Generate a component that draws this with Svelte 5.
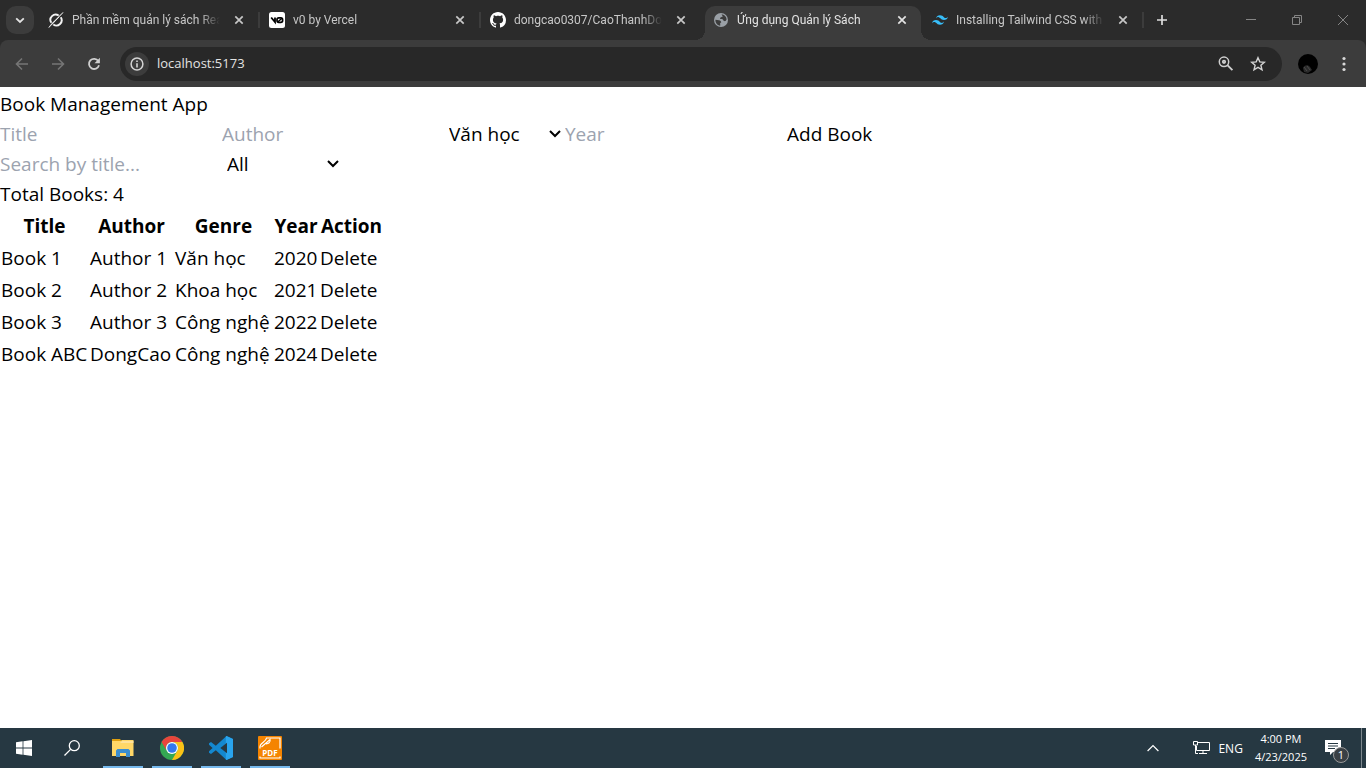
<script>
  const tabs = [
    { icon: 'grok', title: 'Phần mềm quản lý sách React' },
    { icon: 'v0', title: 'v0 by Vercel' },
    { icon: 'github', title: 'dongcao0307/CaoThanhDong' },
    { icon: 'globe', title: 'Ứng dụng Quản lý Sách', active: true },
    { icon: 'tailwind', title: 'Installing Tailwind CSS with Vite' }
  ];
  const genres = ['Văn học', 'Khoa học', 'Công nghệ'];

  let books = $state([
    { title: 'Book 1', author: 'Author 1', genre: 'Văn học', year: 2020 },
    { title: 'Book 2', author: 'Author 2', genre: 'Khoa học', year: 2021 },
    { title: 'Book 3', author: 'Author 3', genre: 'Công nghệ', year: 2022 },
    { title: 'Book ABC', author: 'DongCao', genre: 'Công nghệ', year: 2024 }
  ]);
  let title = $state('');
  let author = $state('');
  let genre = $state('Văn học');
  let year = $state('');
  let search = $state('');
  let filter = $state('All');

  const shown = $derived(
    books.filter(
      (b) => b.title.toLowerCase().includes(search.toLowerCase()) && (filter === 'All' || b.genre === filter)
    )
  );

  function addBook() {
    if (!title || !author || !year) return;
    books.push({ title, author, genre, year });
    title = author = year = '';
  }
  function remove(book) {
    books = books.filter((b) => b !== book);
  }
</script>

{#snippet cross()}
  <svg width="10" height="10" viewBox="0 0 10 10"><path d="M1.3 1.3 8.7 8.7M8.7 1.3 1.3 8.7" fill="none" stroke="currentColor" stroke-width="1.7" /></svg>
{/snippet}

{#snippet chevron()}
  <svg class="chev" width="12" height="8" viewBox="0 0 12 8"><path d="M1 1 6 6 11 1" fill="none" stroke="#000" stroke-width="2" /></svg>
{/snippet}

{#snippet favicon(name)}
  <svg class="fav" width="16" height="16" viewBox="0 0 16 16">
    {#if name === 'grok'}
      <g fill="none" stroke="#f2f2f2" stroke-width="1.9">
        <path d="M10.7 3.6A5.2 5.2 0 0 0 3.4 10.8" />
        <path d="M5.3 12.4A5.2 5.2 0 0 0 12.7 5.3" />
      </g>
      <path d="M15.2.4 5.8 10.2 12.1 3.2ZM.7 15.6 4 11.3 11 5 3.5 12.9Z" fill="#f2f2f2" stroke="#f2f2f2" stroke-width=".6" />
    {:else if name === 'v0'}
      <rect width="16" height="16" rx="2.5" fill="#fff" />
      <path d="M2.2 5.5 6 10V5.5" fill="none" stroke="#000" stroke-width="1.8" />
      <rect x="8" y="5.8" width="5.6" height="4.6" rx="1.8" fill="none" stroke="#000" stroke-width="1.7" />
      <path d="m8.7 10 4.5-4" stroke="#000" stroke-width="1.4" />
    {:else if name === 'github'}
      <path fill="#fff" d="M8 0C3.58 0 0 3.58 0 8c0 3.54 2.29 6.53 5.47 7.59.4.07.55-.17.55-.38 0-.19-.01-.82-.01-1.49-2.01.37-2.53-.49-2.69-.94-.09-.23-.48-.94-.82-1.13-.28-.15-.68-.52-.01-.53.63-.01 1.08.58 1.23.82.72 1.21 1.87.87 2.33.66.07-.52.28-.87.51-1.07-1.78-.2-3.64-.89-3.64-3.95 0-.87.31-1.59.82-2.15-.08-.2-.36-1.02.08-2.12 0 0 .67-.21 2.2.82.64-.18 1.32-.27 2-.27s1.36.09 2 .27c1.53-1.04 2.2-.82 2.2-.82.44 1.1.16 1.92.08 2.12.51.56.82 1.27.82 2.15 0 3.07-1.87 3.75-3.65 3.95.29.25.54.73.54 1.48 0 1.07-.01 1.93-.01 2.2 0 .21.15.46.55.38A8.01 8.01 0 0 0 16 8c0-4.42-3.58-8-8-8Z" />
    {:else if name === 'globe'}
      <circle cx="8" cy="8" r="7" fill="#9aa0a6" />
      <path fill="#3c3c3c" d="M2.4 7.7 6 8.2c1.4.3 2.3 1 2.2 2.4l-1 .5v2.6C4.100 13.300 2.300 10.700 2.400 7.700ZM8.500 2.300c2.600.2 4.800 2.200 5.100 4.900-.4 1.500-1.200 2.100-2.300 1.900-1.200-.2-1-1.700-2.200-2L7.300 6.900c-.5-.7 0-1.300.7-1.700l1.800-.7Z" />
    {:else}
      <path fill="#38bdf8" d="M8 3.200c-2.130 0-3.470 1.070-4 3.200.8-1.070 1.730-1.470 2.800-1.200.61.150 1.040.59 1.530 1.080C9.120 7.080 10.030 8 12 8c2.130 0 3.470-1.070 4-3.200-.8 1.070-1.730 1.470-2.800 1.200-.61-.15-1.040-.59-1.530-1.080C10.880 4.120 9.970 3.200 8 3.200ZM4 8C1.870 8 .53 9.070 0 11.200.8 10.130 1.730 9.730 2.800 10c.61.150 1.040.59 1.530 1.080.79.8 1.700 1.720 3.670 1.720 2.130 0 3.470-1.070 4-3.200-.8 1.070-1.730 1.470-2.800 1.200-.61-.15-1.040-.59-1.530-1.080C6.880 8.920 5.970 8 4 8Z" />
    {/if}
  </svg>
{/snippet}

<div class="screen">
  <header class="browser">
    <div class="strip">
      <button class="tabsearch" aria-label="Search tabs">
        <svg width="10" height="7" viewBox="0 0 10 7"><path d="M1.200 1.300 5 5l3.800-3.700" fill="none" stroke="#e3e3e3" stroke-width="1.800" /></svg>
      </button>
      <div class="tabs">
        {#each tabs as tab}
          <div class="tab" class:active={tab.active}>
            {@render favicon(tab.icon)}
            <span class="tabtitle">{tab.title}</span>
            <button class="close" aria-label="Close tab">{@render cross()}</button>
          </div>
        {/each}
      </div>
      <button class="newtab" aria-label="New tab">
        <svg width="12" height="12" viewBox="0 0 12 12"><path d="M6 1v10M1 6h10" stroke="#dedede" stroke-width="1.700" /></svg>
      </button>
      <div class="wincontrols">
        <button aria-label="Minimize"><svg width="12" height="12" viewBox="0 0 12 12"><path d="M1 5.500h10" stroke="#858585" /></svg></button>
        <button aria-label="Restore"><svg width="12" height="12" viewBox="0 0 12 12" fill="none" stroke="#858585"><path d="M1.500 3.500h7v7h-7zM3.500 3.500v-2h7v7h-2" /></svg></button>
        <button aria-label="Close"><svg width="12" height="12" viewBox="0 0 12 12"><path d="m1 1 10 10M11 1 1 11" stroke="#858585" /></svg></button>
      </div>
    </div>

    <div class="toolbar">
      <button class="nav" aria-label="Back"><svg width="14" height="14" viewBox="0 0 14 14" fill="none" stroke="#757575" stroke-width="1.600"><path d="M13 7H2M7 1.500 1.500 7 7 12.500" /></svg></button>
      <button class="nav" aria-label="Forward"><svg width="14" height="14" viewBox="0 0 14 14" fill="none" stroke="#757575" stroke-width="1.600"><path d="M1 7h11M7 1.500 12.500 7 7 12.500" /></svg></button>
      <button class="nav" aria-label="Reload"><svg width="14" height="14" viewBox="0 0 14 14"><path d="M11.300 4A5.100 5.100 0 1 0 12 8.300" fill="none" stroke="#d0d0d0" stroke-width="1.800" /><path d="M12.900.8v5.400H7.500Z" fill="#d0d0d0" /></svg></button>
      <div class="omnibox">
        <button class="info" aria-label="Site information"><svg width="14" height="14" viewBox="0 0 14 14"><circle cx="7" cy="7" r="5.900" fill="none" stroke="#d4d4d4" stroke-width="1.500" /><path d="M7 6.200v4.200M7 3.500V5" stroke="#d4d4d4" stroke-width="1.600" /></svg></button>
        <input class="url" aria-label="Address" value="localhost:5173" />
        <button class="act" aria-label="Zoom"><svg width="16" height="16" viewBox="0 0 16 16" fill="none" stroke="#cfcfcf"><circle cx="6" cy="5.800" r="4.700" stroke-width="1.500" /><circle cx="6" cy="5.800" r="1.200" stroke-width="1.800" /><path d="m9.400 9.200 5 5" stroke-width="1.900" /></svg></button>
        <button class="act" aria-label="Bookmark"><svg width="16" height="16" viewBox="0 0 16 16"><path d="m8 1.700 1.800 4.200 4.600.4-3.500 3 1.100 4.500L8 11.400l-4 2.400 1.100-4.500-3.500-3 4.600-.4Z" fill="none" stroke="#d4d4d4" stroke-width="1.400" /></svg></button>
      </div>
      <button class="avatar" aria-label="Profile"><svg width="20" height="20" viewBox="0 0 20 20"><circle cx="10" cy="10" r="10" fill="#000" /><path d="M5 14c1-3 5-4 7-1l2 3-4 3-4-1Z" fill="#2a2a2a" /><path d="m6 13 3 4M9 12l3 4" stroke="#4a4a4a" /></svg></button>
      <button class="menu" aria-label="Menu"><svg width="4" height="16" viewBox="0 0 4 16" fill="#d8d8d8"><circle cx="2" cy="2.500" r="1.600" /><circle cx="2" cy="8" r="1.600" /><circle cx="2" cy="13.500" r="1.600" /></svg></button>
    </div>
  </header>

  <main>
    <h1>Book Management App</h1>
    <div class="row">
      <input aria-label="Title" placeholder="Title" bind:value={title} />
      <input aria-label="Author" placeholder="Author" bind:value={author} />
      <div class="pick">
        <select aria-label="Genre" bind:value={genre}>
          {#each genres as g}<option>{g}</option>{/each}
        </select>
        {@render chevron()}
      </div>
      <input aria-label="Year" placeholder="Year" bind:value={year} />
      <button onclick={addBook}>Add Book</button>
    </div>
    <div class="row">
      <input aria-label="Search by title" placeholder="Search by title..." bind:value={search} />
      <div class="pick">
        <select aria-label="Filter by genre" bind:value={filter}>
          <option>All</option>
          {#each genres as g}<option>{g}</option>{/each}
        </select>
        {@render chevron()}
      </div>
    </div>
    <p>Total Books: {books.length}</p>
    <table>
      <colgroup><col class="c1" /><col class="c2" /><col class="c3" /><col class="c4" /><col class="c5" /></colgroup>
      <thead>
        <tr><th>Title</th><th>Author</th><th>Genre</th><th>Year</th><th>Action</th></tr>
      </thead>
      <tbody>
        {#each shown as book}
          <tr>
            <td>{book.title}</td><td>{book.author}</td><td>{book.genre}</td><td>{book.year}</td>
            <td><button onclick={() => remove(book)}>Delete</button></td>
          </tr>
        {/each}
      </tbody>
    </table>
  </main>

  <footer class="taskbar">
    <button class="task" aria-label="Start"><svg width="16" height="16" viewBox="0 0 16 16" fill="#fff"><path d="M0 2.200 6.600 1.300v6.300H0ZM7.400 1.200 16 0v7.600H7.400ZM0 8.400h6.600v6.300L0 13.800ZM7.400 8.400H16V16l-8.600-1.200Z" /></svg></button>
    <button class="task" aria-label="Search"><svg width="16" height="16" viewBox="0 0 16 16" fill="none" stroke="#fff" stroke-width="1.300"><circle cx="10.300" cy="5.700" r="5" /><path d="M6.600 9.400.5 15.500" /></svg></button>
    <button class="task open first" aria-label="File Explorer"><svg width="22" height="18" viewBox="0 0 22 18"><path d="M0 0h8l2 2.500H0Z" fill="#e0a010" /><path d="M0 2h8.500L10 1h11.500v16H0Z" fill="#ffd767" /><path d="M0 4h8l2-2h11.500v2Z" fill="#ffe29a" /><path d="M4 18v-6.500L5.500 10h11l1.500 1.500V18h-4v-4H8v4Z" fill="#3b8ed0" /></svg></button>
    <button class="task open" aria-label="Chrome"><svg width="24" height="24" viewBox="0 0 24 24"><circle cx="12" cy="12" r="12" fill="#34a853" /><path d="M1.600 6A12 12 0 0 1 22.400 6H12a6 6 0 0 0-5.200 9Z" fill="#e8453c" /><path d="M22.400 6A12 12 0 0 1 12 24l5.200-9A6 6 0 0 0 12 6Z" fill="#fbc116" /><circle cx="12" cy="12" r="6" fill="#fff" /><circle cx="12" cy="12" r="4.800" fill="#3478ed" /></svg></button>
    <button class="task open" aria-label="Visual Studio Code"><svg width="24" height="24" viewBox="0 0 24 24"><path d="M17.500 0 24 2.900v18.200L17.500 24 6.800 14.200 2 17.900 0 16.800v-1.500L3.600 12 0 8.700V7.200L2 6.100l4.800 3.700Z" fill="#1488cf" /><path d="M17.500 0 24 2.900v18.200L17.500 24l-.7-.6V.6Z" fill="#29a4ed" /><path d="M18 6.800v10.400L11.300 12Z" fill="#263842" /></svg></button>
    <button class="task open" aria-label="PDF Reader"><svg width="24" height="24" viewBox="0 0 24 24"><rect width="24" height="24" rx="1" fill="#f58400" /><path d="M2 12.500V11C2 6 8 6.500 8.500 2H22v10.500M2 20.500V22h20v-1.500M3.500 11 12 3.500c1 3-2 4-4 4.500" fill="none" stroke="#fff" stroke-width="1.200" /><text x="12" y="20" text-anchor="middle" font-size="8" font-weight="700" fill="#fff">PDF</text></svg></button>
    <div class="tray">
      <button class="up" aria-label="Show hidden icons"><svg width="12" height="8" viewBox="0 0 12 8"><path d="m.6 7 5.400-5.500L11.400 7" fill="none" stroke="#fff" stroke-width="1.200" /></svg></button>
      <button class="net" aria-label="Network"><svg width="17" height="14" viewBox="0 0 17 14" fill="none" stroke="#fff"><path d="M5 1.500h11.500v8H3.500V5M.5.500h4V4h-4ZM2.500 4v8.500H5M10 9.500v3M6 12.500h8" /></svg></button>
      <button class="lang">ENG</button>
      <button class="clock"><span>4:00 PM</span><span>4/23/2025</span></button>
      <button class="note" aria-label="Notifications">
        <svg width="16" height="16" viewBox="0 0 16 16"><path d="M0 0h16v12H8l-3 3v-3H0Z" fill="#fff" /><path d="M3 3.500h10M3 6h10M3 8.500h7" stroke="#263842" /></svg>
        <span class="badge">1</span>
      </button>
    </div>
  </footer>
</div>

<style>
  :global(body) { margin: 0; background: #fff; }
  .screen { min-height: 100vh; display: flex; flex-direction: column; font-family: "Open Sans", "Noto Sans", sans-serif; color: #000; }
  .screen * { box-sizing: border-box; }
  button, input, select { font: inherit; color: inherit; background: none; border: 0; border-radius: 0; padding: 0; margin: 0; outline: 0; }
  svg { display: block; flex: none; }

  .browser { background: #2b2b2b; color: #c7c7c7; }
  .strip { display: flex; align-items: center; height: 40px; }
  .tabsearch { display: grid; place-items: center; width: 28px; height: 28px; margin: 0 8px 0 6px; border-radius: 10px; background: #3c3c3c; }
  .tabs { display: flex; flex: 0 1 1104px; min-width: 0; height: 40px; padding-top: 6px; }
  .tab { position: relative; display: flex; align-items: center; flex: 0 1 217px; min-width: 0; height: 34px; padding: 0 12px 6px 6px; margin-right: 5px; }
  .tab:not(.active)::after { content: ""; position: absolute; right: -2px; top: 6px; width: 2px; height: 16px; background: #3c3c3c; }
  .tab:has(+ .active)::after { display: none; }
  .tab.active { background: #3c3c3c; border-radius: 10px 10px 0 0; color: #e3e3e3; padding-left: 8px; }
  .tab.active::before, .tab.active::after { content: ""; position: absolute; bottom: 0; width: 10px; height: 10px; }
  .tab.active::before { left: -10px; background: radial-gradient(circle at 0 0, transparent 10px, #3c3c3c 10px); }
  .tab.active::after { right: -10px; background: radial-gradient(circle at 100% 0, transparent 10px, #3c3c3c 10px); }
  .tabtitle { flex: 1; min-width: 0; margin: 0 12px 0 8px; line-height: 20px; font-family: Roboto, "Noto Sans", sans-serif; font-size: 12px; overflow: hidden; white-space: nowrap; mask-image: linear-gradient(to right, #000 calc(100% - 20px), transparent); }
  .close { display: grid; place-items: center; width: 14px; height: 16px; flex: none; }
  .newtab { display: grid; place-items: center; width: 30px; height: 30px; flex: none; }
  .tabs { flex-basis: 1105px; }
  .wincontrols { display: flex; margin-left: auto; flex: none; }
  .wincontrols button { display: grid; place-items: center; width: 46px; height: 40px; }

  .toolbar { display: flex; align-items: center; height: 47px; padding: 0 12px 0 4px; background: #3c3c3c; border-radius: 8px 8px 0 0; }
  .nav { display: grid; place-items: center; width: 36px; height: 34px; flex: none; }
  .omnibox { display: flex; align-items: center; flex: 1; min-width: 0; height: 34px; margin-left: 8px; padding: 0 16px 0 5px; border-radius: 17px; background: #282828; }
  .info { display: grid; place-items: center; width: 24px; height: 24px; border-radius: 12px; background: #3c3c3c; }
  .url { flex: 1; min-width: 0; height: 22px; padding-bottom: 2px; margin-left: 8px; font-size: 13px; color: #e3e3e3; }
  .act { display: grid; place-items: center; width: 16px; margin-left: 16px; }
  .avatar { margin-left: 16px; }
  .menu { display: grid; place-items: center; width: 20px; margin-left: 16px; }

  main { flex: 1; padding-top: 2px; font-size: 19px; line-height: 30px; }
  h1, p { margin: 0; font-size: 19px; font-weight: 400; line-height: 30px; }
  .row { display: flex; flex-wrap: wrap; }
  .row input { width: 222px; height: 30px; }
  .row input::placeholder { color: #9ca3af; opacity: 1; }
  .pick { display: grid; align-items: center; width: 121px; }
  .pick select { grid-area: 1 / 1; appearance: none; width: 100%; height: 30px; padding-left: 5px; }
  .chev { grid-area: 1 / 1; justify-self: end; margin-right: 4px; pointer-events: none; }
  table { table-layout: fixed; width: 384px; border-collapse: collapse; white-space: nowrap; }
  .c1 { width: 89px; } .c2 { width: 85px; } .c3 { width: 99px; } .c4 { width: 46px; } .c5 { width: 65px; }
  th { height: 33px; padding: 1px; font-weight: 700; }
  td { height: 32px; padding: 1px; text-align: left; }

  .taskbar { display: flex; align-items: stretch; height: 40px; background: #263842; color: #fff; font-size: 12px; }
  .task { display: grid; place-items: center; width: 48px; border-bottom: 2px solid transparent; border-top: 2px solid transparent; }
  .open { width: 40px; margin-left: 9px; border-bottom-color: #76b9ed; }
  .first { margin-left: 7px; }
  .tray { display: flex; align-items: center; margin: 0 4px 0 auto; border-right: 1px solid #7d878d; }
  .up { margin-right: 34px; }
  .net { margin-right: 8px; }
  .lang { margin-right: 12px; }
  .clock { display: flex; flex-direction: column; align-items: center; line-height: 18px; font-size: 11px; margin-right: 18px; }
  .note { position: relative; margin-right: 20px; }
  .badge { position: absolute; left: 8px; top: 7px; width: 16px; height: 16px; border: 1px solid #999; border-radius: 8px; background: #3a4045; font-size: 11px; line-height: 14px; text-align: center; }
</style>
